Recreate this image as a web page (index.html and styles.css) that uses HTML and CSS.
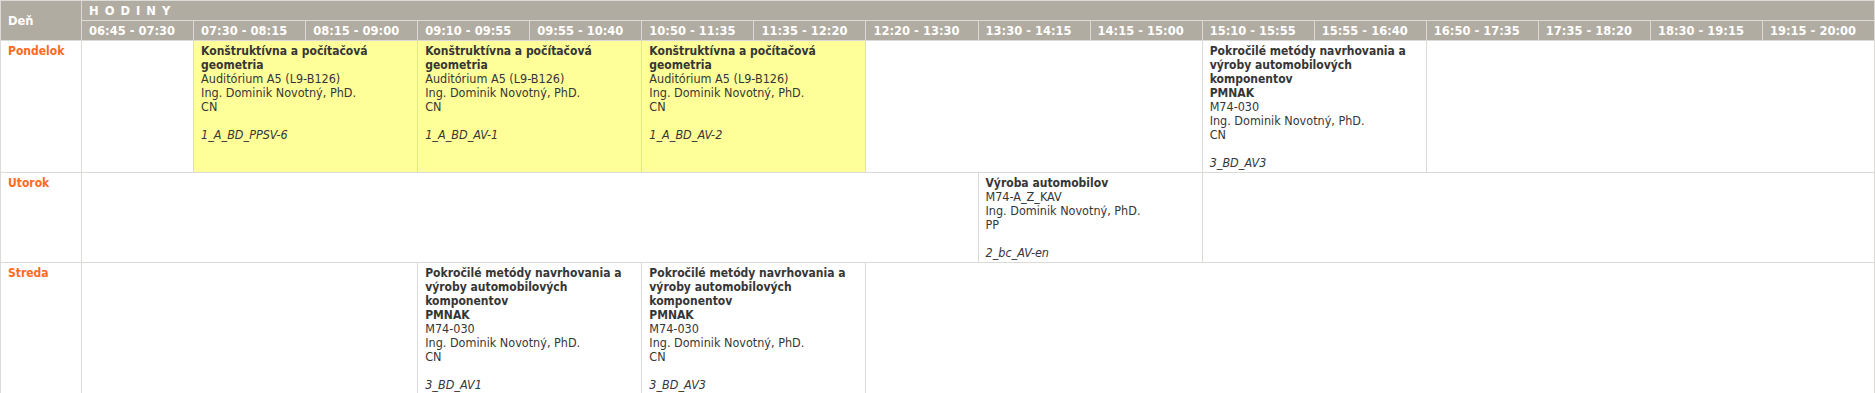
FILE: index.html
```html
<!DOCTYPE html>
<html lang="sk">
<head>
<meta charset="utf-8">
<title>Rozvrh</title>
<link rel="stylesheet" href="styles.css">
</head>
<body>
<table class="tt">
  <colgroup>
    <col class="col-day">
    <col span="16">
  </colgroup>
  <thead>
    <tr>
      <th class="h-day" rowspan="2">Deň</th>
      <th class="h-title" colspan="16">HODINY</th>
    </tr>
    <tr class="h-times">
      <th>06:45 - 07:30</th>
      <th>07:30 - 08:15</th>
      <th>08:15 - 09:00</th>
      <th>09:10 - 09:55</th>
      <th>09:55 - 10:40</th>
      <th>10:50 - 11:35</th>
      <th>11:35 - 12:20</th>
      <th>12:20 - 13:30</th>
      <th>13:30 - 14:15</th>
      <th>14:15 - 15:00</th>
      <th>15:10 - 15:55</th>
      <th>15:55 - 16:40</th>
      <th>16:50 - 17:35</th>
      <th>17:35 - 18:20</th>
      <th>18:30 - 19:15</th>
      <th>19:15 - 20:00</th>
    </tr>
  </thead>
  <tbody>
    <tr>
      <td class="day">Pondelok</td>
      <td></td>
      <td class="ev ev-lecture" colspan="2"><div class="ev-title">Konštruktívna a počítačová geometria</div><div>Auditórium A5 (L9-B126)</div><div>Ing. Dominik Novotný, PhD.</div><div>CN</div><div class="ev-group">1_A_BD_PPSV-6</div></td>
      <td class="ev ev-lecture" colspan="2"><div class="ev-title">Konštruktívna a počítačová geometria</div><div>Auditórium A5 (L9-B126)</div><div>Ing. Dominik Novotný, PhD.</div><div>CN</div><div class="ev-group">1_A_BD_AV-1</div></td>
      <td class="ev ev-lecture" colspan="2"><div class="ev-title">Konštruktívna a počítačová geometria</div><div>Auditórium A5 (L9-B126)</div><div>Ing. Dominik Novotný, PhD.</div><div>CN</div><div class="ev-group">1_A_BD_AV-2</div></td>
      <td colspan="3"></td>
      <td class="ev" colspan="2"><div class="ev-title">Pokročilé metódy navrhovania a výroby automobilových komponentov<br>PMNAK</div><div>M74-030</div><div>Ing. Dominik Novotný, PhD.</div><div>CN</div><div class="ev-group">3_BD_AV3</div></td>
      <td colspan="4"></td>
    </tr>
    <tr>
      <td class="day">Utorok</td>
      <td colspan="8"></td>
      <td class="ev" colspan="2"><div class="ev-title">Výroba automobilov</div><div>M74-A_Z_KAV</div><div>Ing. Dominik Novotný, PhD.</div><div>PP</div><div class="ev-group">2_bc_AV-en</div></td>
      <td colspan="6"></td>
    </tr>
    <tr>
      <td class="day">Streda</td>
      <td colspan="3"></td>
      <td class="ev" colspan="2"><div class="ev-title">Pokročilé metódy navrhovania a výroby automobilových komponentov<br>PMNAK</div><div>M74-030</div><div>Ing. Dominik Novotný, PhD.</div><div>CN</div><div class="ev-group">3_BD_AV1</div></td>
      <td class="ev" colspan="2"><div class="ev-title">Pokročilé metódy navrhovania a výroby automobilových komponentov<br>PMNAK</div><div>M74-030</div><div>Ing. Dominik Novotný, PhD.</div><div>CN</div><div class="ev-group">3_BD_AV3</div></td>
      <td colspan="9"></td>
    </tr>
  </tbody>
</table>
</body>
</html>
```

FILE: styles.css
```css
html, body {
  margin: 0;
  padding: 0;
  background: #ffffff;
}

body {
  font-family: "DejaVu Sans Condensed", "DejaVu Sans", sans-serif;
  font-stretch: condensed;
  font-size: 12.5px;
  line-height: 14px;
  color: #363636;
}

.tt {
  width: 1875px;
  border-collapse: collapse;
  table-layout: fixed;
}

.col-day {
  width: 81px;
}

.tt th,
.tt td {
  border: 1px solid #dcdad6;
  padding: 3px 6px 2px 7px;
  vertical-align: top;
  text-align: left;
}

.tt th {
  background: #b1aca1;
  color: #ffffff;
  font-weight: bold;
  font-size: 12.8px;
  padding: 2px 6px 2px 7px;
  line-height: 15px;
}

.tt .h-day {
  vertical-align: middle;
}

.tt .h-title {
  letter-spacing: 6px;
}

.day {
  color: #ff6a22;
  font-weight: bold;
  font-size: 12px;
}

.ev-title {
  font-weight: bold;
  font-size: 12px;
}

.ev-group {
  font-style: italic;
  margin-top: 14px;
}

.ev-lecture {
  background: #ffff99;
}
```
